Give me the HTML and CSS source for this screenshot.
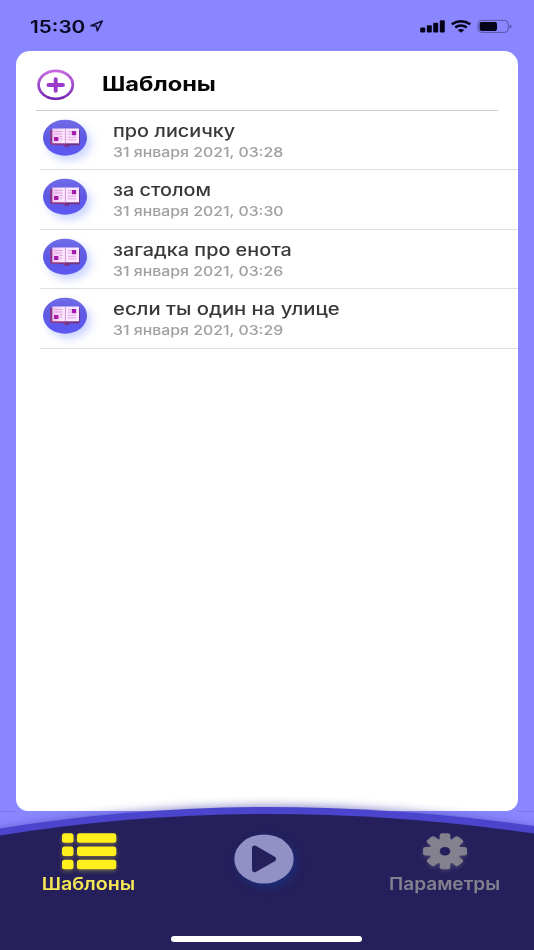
FILE: index.html
```html
<!DOCTYPE html>
<html lang="ru">
<head>
<meta charset="utf-8">
<meta name="viewport" content="width=device-width, initial-scale=1">
<title>Шаблоны</title>
<link rel="stylesheet" href="styles.css">
</head>
<body>
<svg class="defs" width="0" height="0" aria-hidden="true">
  <defs>
    <linearGradient id="disc" x1="0" y1="0" x2="0" y2="1"><stop offset="0" stop-color="#716ce8"/><stop offset=".45" stop-color="#5f5ae2"/><stop offset="1" stop-color="#5b57f2"/></linearGradient>
    <linearGradient id="page" x1="0" y1="0" x2="1" y2="0"><stop offset="0" stop-color="#f0c4f3"/><stop offset="1" stop-color="#fdeeff"/></linearGradient>
    <symbol id="book" viewBox="0 0 64 60">
      <ellipse cx="30" cy="26.7" rx="22" ry="18" fill="url(#disc)"/>
      <path d="M15.3 19v14.3q7 .8 13.4 1l1.8 1.7h2.6l1.8-1.8h9.8V19" fill="#713080"/>
      <path d="M16 19v14h12.5l3 2" fill="none" stroke="#a83a86"/>
      <path d="M17.3 17.5H30.4V32.3H17.3z" fill="url(#page)"/>
      <path d="M30.4 17.5H44V32.3H30.4z" fill="#fbe6ff"/>
      <path d="M30.4 17.5v15" stroke="#d894df" stroke-width=".9"/>
      <path d="M19.5 20.5h8M19.5 23h8M24.5 25.5h3M24.5 28h3M33 20.5h3M33 23h3M33 26.3h8M33 28.8h8" stroke="#e3a0e2" stroke-width="1"/>
      <path d="M19 26h4.4v4H19zM36.8 20h4.4v4.2h-4.4z" fill="#a51cad"/>
    </symbol>
  </defs>
</svg>
<div class="screen">
  <header class="status">
    <span class="time wide">15:30</span>
    <svg class="location" width="14" height="12" viewBox="0 0 14 12"><path d="M1 5.7 12.3 1 7.3 10.8 6.3 6z" fill="none" stroke="#11103c" stroke-width="1.6" stroke-linejoin="round"/></svg>
    <svg class="signals" width="94" height="16" viewBox="0 0 94 16">
      <g fill="#05041a"><rect x=".2" y="9.5" width="5" height="5" rx="1"/><rect x="6.8" y="7.3" width="5" height="7.2" rx="1"/><rect x="13.2" y="4.8" width="5" height="9.7" rx="1"/><rect x="19.8" y="2.3" width="5" height="12.2" rx="1"/></g>
      <g fill="none" stroke="#05041a" stroke-width="2.5"><path d="M31.7 6.2q9.3-6 18.6 0"/><path d="M35.2 9.4q5.8-3.8 11.6 0"/></g><path d="M37.8 12q3.2-2.1 6.4 0L41 14.8z" fill="#05041a"/>
      <rect x="58" y="2.4" width="30.2" height="12" rx="3.5" fill="none" stroke="#5b56a8"/><rect x="59.6" y="4" width="17.4" height="8.9" rx="1.8" fill="#05041a"/><path d="M89.6 6.4q2 .4 2 2t-2 2z" fill="#5b56a8"/>
    </svg>
  </header>
  <main class="card">
    <div class="heading">
      <svg class="add" width="40" height="32" viewBox="0 0 40 32">
        <defs><linearGradient id="ring" x1="0" y1="0" x2="0" y2="1"><stop offset="0" stop-color="#c56be0"/><stop offset="1" stop-color="#7a28b4"/></linearGradient></defs>
        <ellipse cx="19.7" cy="16.8" rx="17.1" ry="14" fill="none" stroke="url(#ring)" stroke-width="2.7"/>
        <path d="M12.5 17h14.4M19.7 11.2v11.6" stroke="#9c3bca" stroke-width="4" stroke-linecap="round"/>
      </svg>
      <h1 class="title wide">Шаблоны</h1>
    </div>
    <ul class="list">
      <li class="row"><svg class="book"><use href="#book"/></svg><div class="copy"><span class="name wide">про лисичку</span><span class="date wide">31 января 2021, 03:28</span></div></li>
      <li class="row"><svg class="book"><use href="#book"/></svg><div class="copy"><span class="name wide">за столом</span><span class="date wide">31 января 2021, 03:30</span></div></li>
      <li class="row"><svg class="book"><use href="#book"/></svg><div class="copy"><span class="name wide">загадка про енота</span><span class="date wide">31 января 2021, 03:26</span></div></li>
      <li class="row"><svg class="book"><use href="#book"/></svg><div class="copy"><span class="name wide long">если ты один на улице</span><span class="date wide">31 января 2021, 03:29</span></div></li>
    </ul>
  </main>
  <nav class="tabs">
    <svg class="arc" width="534" height="160" viewBox="0 0 534 160">
      <defs>
        <filter id="haze" x="-10%" y="-20%" width="120%" height="140%"><feGaussianBlur stdDeviation="5"/></filter>
      </defs>
      <path d="M0 21.5H15.5" stroke="#7774e8"/><path d="M518 21.5H534" stroke="#7774e8"/>
      <path d="M-20 43Q267-11 554 41V170H-20z" fill="#4540a8" opacity=".6" filter="url(#haze)"/>
      <path d="M0 38.5Q134 17 267 17T534 36V160H0z" fill="#4b45cd"/>
      <path d="M0 45.5Q134 24 267 24T534 43.5V160H0z" fill="#251f5b"/>
    </svg>
    <a class="tab active">
      <svg width="66" height="46" viewBox="0 0 66 46"><g fill="#fff01d"><rect x="6" y="4.2" width="11.5" height="9.5" rx="2.5"/><rect x="21" y="4.2" width="39.3" height="9.5" rx="2.5"/><rect x="6" y="17.4" width="11.5" height="9.5" rx="2.5"/><rect x="21" y="17.4" width="39.3" height="9.5" rx="2.5"/><rect x="6" y="30.8" width="11.5" height="9.5" rx="2.5"/><rect x="21" y="30.8" width="39.3" height="9.5" rx="2.5"/></g></svg>
      <span class="label wide">Шаблоны</span>
    </a>
    <a class="play"><svg width="60" height="50" viewBox="0 0 60 50"><ellipse cx="30" cy="25" rx="29.7" ry="24.5" fill="#9191c5"/><path d="M20.5 14 39.5 25 20.5 35.7z" fill="#251f5b" stroke="#251f5b" stroke-width="5" stroke-linejoin="round"/></svg></a>
    <a class="tab settings">
      <svg width="66" height="46" viewBox="0 0 66 46"><g transform="translate(33 22.2) scale(1.22 1)"><g fill="#84818f"><circle r="13"/><rect x="-4.3" y="-18" width="8.6" height="36" rx="2"/><rect x="-4.3" y="-18" width="8.6" height="36" rx="2" transform="rotate(45)"/><rect x="-4.3" y="-18" width="8.6" height="36" rx="2" transform="rotate(90)"/><rect x="-4.3" y="-18" width="8.6" height="36" rx="2" transform="rotate(135)"/></g><circle r="4.3" fill="#251f5b"/></g></svg>
      <span class="label wide">Параметры</span>
    </a>
    <div class="home"></div>
  </nav>
</div>
</body>
</html>
```
FILE: styles.css
```css
* { box-sizing: border-box; }
body { margin: 0; background: #8a86ff; font-family: Inter, "Noto Sans", sans-serif; }
.defs { position: absolute; }
.screen { width: 534px; height: 950px; display: flex; flex-direction: column; overflow: hidden; background: #8a86ff; }
.wide { display: inline-block; white-space: nowrap; transform: scaleX(1.22); transform-origin: left center; }
.status { height: 51px; flex: none; display: flex; align-items: flex-start; padding: 18px 20px 0 30px; color: #090821; }
.time { width: 60px; padding-top: 1px; font-size: 17px; line-height: 17px; font-weight: 600; }
.location { margin-top: 2px; }
.signals { margin-left: auto; }
.card { flex: none; width: 502.5px; height: 760px; margin-left: 15.5px; background: #fff; border-radius: 14px 14px 12px 12px; }
.heading { height: 60px; margin: 0 20px 0 20.5px; border-bottom: 1.5px solid #cfcfd2; display: flex; align-items: center; padding-top: 7px; }
.title { margin: 0 0 0 25.5px; color: #050505; font-size: 20px; line-height: 26px; font-weight: 700; transform: scaleX(1.18); }
.list { list-style: none; margin: 0; padding: 0; }
.row { height: 59.4px; margin-left: 24.5px; border-bottom: 1.3px solid #e0e0e2; display: flex; }
.book { width: 64px; height: 60px; margin-left: -5px; flex: none; filter: drop-shadow(4px 5px 4px #a9b8ff99); }
.copy { margin-left: 14px; padding-top: 8px; display: flex; flex-direction: column; align-items: flex-start; }
.name { color: #39393b; font-size: 17px; line-height: 24px; font-weight: 500; transform: scaleX(1.165); }
.name.long { transform: scaleX(1.19); }
.date { color: #a0a0a2; font-size: 13px; line-height: 19px; font-weight: 500; }
.tabs { height: 160px; flex: none; margin-top: -21px; position: relative; display: grid; grid-template-columns: 177px 174px 183px; }
.arc { position: absolute; inset: 0; }
.tab, .play { position: relative; display: flex; flex-direction: column; align-items: center; }
.tab { padding-top: 39px; }
.tab svg { flex: none; }
.label { transform: scaleX(1.157); transform-origin: center; font-size: 17px; line-height: 18px; font-weight: 600; }
.active { color: #f5e754; }
.active svg { filter: drop-shadow(0 2px 2px #a69b3a88); }
.settings { color: #84818f; padding-left: 4px; }
.settings .label { transform: scaleX(1.12); }
.settings svg { filter: drop-shadow(0 2px 2px #84818f55); }
.play { padding-top: 44px; }
.play svg { filter: drop-shadow(3px 4px 4px #14399188); }
.home { position: absolute; left: 171px; top: 146px; width: 191px; height: 5.5px; border-radius: 3px; background: #fff; }
```
